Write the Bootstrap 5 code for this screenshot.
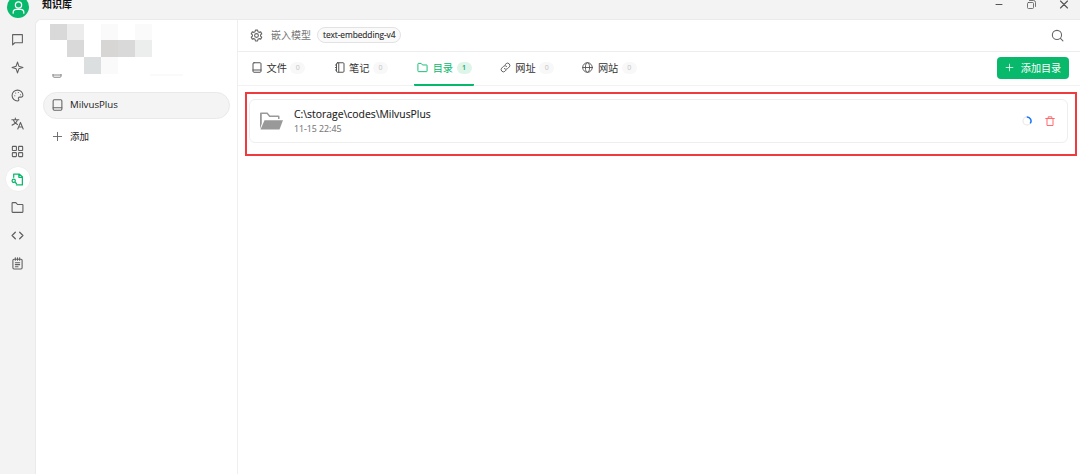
<!DOCTYPE html>
<html lang="zh-CN">
<head>
<meta charset="utf-8">
<meta name="viewport" content="width=device-width, initial-scale=1">
<title>知识库</title>
<link href="https://cdn.jsdelivr.net/npm/bootstrap@5.3.0/dist/css/bootstrap.min.css" rel="stylesheet">
<style>
  body { height: 474px; overflow: hidden; background: #f3f3f3; color: #202020; font: 10.2px/14px "Open Sans", "Noto Sans CJK SC", sans-serif; }
  svg { display: block; flex: none; fill: none; stroke: currentColor; stroke-width: 2; stroke-linecap: round; stroke-linejoin: round; }
  .titlebar { height: 19px; padding-left: 7px; }
  .avatar { width: 22px; height: 22px; margin-top: -4px; background: #08b96b; color: #fff; }
  .app-title { margin: 0 0 0 13px; font-size: 10px; line-height: 9px; color: #111; }
  .winbtns { gap: 21px; margin: -1px 10px 0 0; color: #555; height: 11px; }
  .rail { width: 35px; padding-top: 8px; gap: 4.1px; color: #606060; }
  .rail-item { width: 24px; height: 24px; color: inherit; }
  .rail-item.on { background: #fff; color: #08b96b; box-shadow: 0 0 0 .5px #e9e9e9; }
  .shell { height: 455px; }
  .panel { border: 1px solid #eaeaea; border-width: 1px 0 0 1px; border-top-left-radius: 6px; background: #fff; min-width: 0; }
  .bases { width: 202px; padding: 0 7px 0 7px; border-right: 1px solid #efefef; }
  .mosaic { display: grid; grid-template-columns: repeat(6, 17px); grid-template-rows: 16px 17px 17px; margin: 4px 0 0 7px; }
  .g1 { background: #d9d9d9; } .g2 { background: #ececec; } .g3 { background: #fafafa; } .g4 { background: #dcdfdf; } .g5 { background: #d8d6d5; } .g6 { background: #eceeed; }
  .hidden-item { height: 5px; margin: 0 0 0 9px; overflow: hidden; color: #888; }
  .hidden-item svg { margin-top: -7px; }
  .hidden-item i { width: 33px; height: 2px; background: #fafafa; margin-left: 88px; }
  .base-item { height: 27px; padding-left: 8px; gap: 7px; border: 1px solid #e9e9e9; border-radius: 14px; background: #f4f4f4; margin-top: 13px; font-size: 9.7px; }
  .base-item svg { margin-top: -1px; }
  .base-item span { margin-top: -1px; }
  .base-add { height: 26px; padding-left: 9px; gap: 7px; margin-top: 5px; font-size: 9.5px; }
  .base-add svg { margin-top: -1px; }
  .icon-dim { color: #666; }
  .content-pane { min-width: 0; }
  .model-row { height: 32px; padding: 0 16px 1px 12px; border-bottom: 1px solid #ededed; }
  .model-label { margin-left: 8px; color: #777; font-size: 10px; }
  .model-tag { height: 16px; line-height: 14px; padding: 0 5px; border: 1px solid #e2e2e2; border-radius: 8px; background: #fafafa; font-size: 8.4px; letter-spacing: -.08px; color: #222; margin-left: 6px; -webkit-text-stroke: .1px #333; }
  .tab-row { height: 34px; padding: 0 11px; border-bottom: 1px solid #f2f2f2; gap: 22.6px; }
  .kb-tab { width: 60px; padding: 0 3px; height: 33.500px; border-bottom: 2px solid transparent; border-radius: 1px; color: #333; white-space: nowrap; flex: none; }
  .kb-tab svg { margin-right: 4.5px; color: #555; }
  .kb-tab.on, .kb-tab.on svg { color: #08b96b; }
  .kb-tab.on { border-color: #08b96b; }
  .count { width: 15px; flex: none; height: 12px; line-height: 12px; border-radius: 6px; background: #f8f8f8; color: #c2c2c2; font-size: 7px; margin-left: 3.5px; text-align: center; }
  .on .count { background: #dff5ea; color: #08a65f; font-weight: 600; }
  .add-btn { width: 72px; height: 22px; padding: 0; border: 0; border-radius: 4px; background: #08b96b !important; color: #fff !important; font-size: 10.1px; line-height: 20px; gap: 7px; margin-bottom: 2px; }
  .marked { margin: 6px 3px 0 7px; height: 64px; border: 2px solid #ef3a40; padding: 5px 7px 0 2px; }
  .dir-card { height: 44px; border: 1px solid #eee; border-radius: 6px; padding: 0 12px 0 10px; }
  .dir-path { font-size: 10.4px; line-height: 15px; -webkit-text-stroke: .1px #202020; }
  .dir-date { font-size: 8.75px; line-height: 15px; color: #777; -webkit-text-stroke: .1px #888; }
  .dir-text { margin: 1px 0 0 11px; }
  .dir-actions { margin-top: -1px; gap: 13px; }
</style>
</head>
<body>
<svg class="d-none">
  <symbol id="book" viewBox="0 0 20 22"><rect x="2" y="1.500" width="16" height="19" rx="2"/><path d="M2 16h16"/></symbol>
  <symbol id="folder" viewBox="0 0 24 24"><path d="M2 4a1 1 0 0 1 1-1h6l3 3.500h9a1 1 0 0 1 1 1V20a1 1 0 0 1-1 1H3a1 1 0 0 1-1-1z"/></symbol>
  <symbol id="plus" viewBox="0 0 24 24"><path d="M12 3v18M3 12h18"/></symbol>
</svg>

<header class="titlebar d-flex align-items-start">
  <div class="avatar rounded-circle d-flex align-items-center justify-content-center">
    <svg width="15" height="15" viewBox="0 0 24 24"><circle cx="12" cy="8" r="5"/><path d="M3.500 21v-1q0-5 5-5h7q5 0 5 5v1"/></svg>
  </div>
  <div class="app-title fw-bold">知识库</div>
  <div class="winbtns d-flex align-items-center ms-auto">
    <svg width="12" height="12" viewBox="0 0 12 12" style="stroke-width:1"><path d="M3 5.500h6"/></svg>
    <svg width="11" height="11" viewBox="0 0 11 11" style="stroke-width:.8"><rect x="1.500" y="3.500" width="6" height="6" rx="1"/><path d="M3.500 1.500h4a2 2 0 0 1 2 2v4"/></svg>
    <svg width="12" height="12" viewBox="0 0 12 12" style="stroke-width:1.100"><path d="M2.500 2l7 7m0-7l-7 7"/></svg>
  </div>
</header>

<div class="shell d-flex">
  <nav class="rail d-flex flex-column align-items-center flex-shrink-0">
    <a class="rail-item rounded-circle d-flex align-items-center justify-content-center"><svg width="13" height="13" viewBox="0 0 24 24"><path d="M3 3h18v15H7l-4 4z"/></svg></a>
    <a class="rail-item rounded-circle d-flex align-items-center justify-content-center"><svg width="13" height="13" viewBox="0 0 24 24"><path d="M12 2l2.500 7.500L22 12l-7.500 2.500L12 22l-2.500-7.500L2 12l7.500-2.500z"/></svg></a>
    <a class="rail-item rounded-circle d-flex align-items-center justify-content-center"><svg width="13" height="13" viewBox="0 0 24 24"><path d="M12 2a10 10 0 0 0 0 20c2.500 0 3-2 2-3.500-1-2 0-3.500 2-3.500h3c2 0 3-1 3-3 0-5.500-4.500-10-10-10z"/><path d="M7 12.500h.1M8.500 7.500h.1M13.500 6.500h.1M17.500 10.500h.1"/></svg></a>
    <a class="rail-item rounded-circle d-flex align-items-center justify-content-center"><svg width="13" height="13" viewBox="0 0 24 24"><path d="M1.500 5h13M8 2v3M4 5c1 4 4 7 8 9M12 5c-1 4-5 8-10 10M12.500 22l5-12 5 12M14 18.500h7"/></svg></a>
    <a class="rail-item rounded-circle d-flex align-items-center justify-content-center"><svg width="13" height="13" viewBox="0 0 24 24"><rect x="2.500" y="2.500" width="7.500" height="7.500" rx="1"/><rect x="14" y="2.500" width="7.500" height="7.500" rx="1"/><rect x="2.500" y="14" width="7.500" height="7.500" rx="1"/><rect x="14" y="14" width="7.500" height="7.500" rx="1"/></svg></a>
    <a class="rail-item on rounded-circle d-flex align-items-center justify-content-center"><svg width="13" height="13" viewBox="0 0 24 24" style="stroke-width:2.300"><path d="M5 8V2h10l6 5v15H10M14.500 2v6H21"/><circle cx="5" cy="14.500" r="3"/><path d="M7.500 17l2.500 2.500"/></svg></a>
    <a class="rail-item rounded-circle d-flex align-items-center justify-content-center"><svg width="13" height="13"><use href="#folder"/></svg></a>
    <a class="rail-item rounded-circle d-flex align-items-center justify-content-center"><svg width="13" height="13" viewBox="0 0 24 24" style="stroke-width:2.300"><path d="M8 6l-6 6 6 6M16 6l6 6-6 6"/></svg></a>
    <a class="rail-item rounded-circle d-flex align-items-center justify-content-center"><svg width="13" height="13" viewBox="0 0 24 24"><rect x="3.500" y="4" width="17" height="18" rx="2"/><path d="M8 1.500V6M12 1.500V6M16 1.500V6M8 10.500h8M8 14h8M8 18h5"/></svg></a>
  </nav>

  <main class="panel d-flex flex-grow-1">
    <aside class="bases flex-shrink-0">
      <div class="mosaic">
        <i class="g1"></i><i class="g2"></i><i></i><i class="g3"></i><i></i><i class="g3"></i>
        <i></i><i class="g1"></i><i></i><i class="g5"></i><i class="g1"></i><i class="g6"></i>
        <i></i><i></i><i class="g4"></i><i class="g3"></i><i></i><i></i>
      </div>
      <div class="hidden-item d-flex"><svg width="10" height="11"><use href="#book"/></svg><i></i></div>
      <div class="base-item d-flex align-items-center"><svg class="icon-dim" width="11" height="12"><use href="#book"/></svg><span>MilvusPlus</span></div>
      <div class="base-add d-flex align-items-center"><svg class="icon-dim" width="11" height="11"><use href="#plus"/></svg><span>添加</span></div>
    </aside>

    <section class="content-pane flex-grow-1">
      <div class="model-row d-flex align-items-center">
        <svg class="icon-dim" width="13" height="13" viewBox="0 0 24 24"><path d="M10 2h4l.7 3 2 1.200 3-.9 2 3.500-2.200 2.100v2.200l2.200 2.100-2 3.500-3-.9-2 1.200-.7 3h-4l-.7-3-2-1.200-3 .9-2-3.500 2.200-2.100v-2.200L2.300 8.800l2-3.500 3 .9 2-1.200z"/><circle cx="12" cy="12" r="3.500"/></svg>
        <span class="model-label">嵌入模型</span><span class="model-tag">text-embedding-v4</span>
        <svg class="icon-dim ms-auto" width="13" height="13" viewBox="0 0 24 24"><circle cx="11" cy="11" r="8.500"/><path d="M17.500 17.500L22 22"/></svg>
      </div>
      <div class="d-flex tab-row">
        <div class="kb-tab d-flex align-items-center"><svg width="10" height="11"><use href="#book"/></svg><span>文件</span><span class="count">0</span></div>
        <div class="kb-tab d-flex align-items-center"><svg width="10" height="11" viewBox="0 0 20 22"><rect x="3" y="1.500" width="15" height="19" rx="2"/><path d="M7.500 2v18M1 6h2M1 11h2M1 16h2"/></svg><span>笔记</span><span class="count">0</span></div>
        <div class="kb-tab on d-flex align-items-center"><svg width="11" height="11"><use href="#folder"/></svg><span>目录</span><span class="count">1</span></div>
        <div class="kb-tab d-flex align-items-center"><svg width="11" height="11" viewBox="0 0 24 24"><path d="M9.500 14.500a5 5 0 0 0 7 0l4-4a5 5 0 0 0-7-7l-2.500 2.500M14.500 9.500a5 5 0 0 0-7 0l-4 4a5 5 0 0 0 7 7L13 18"/></svg><span>网址</span><span class="count">0</span></div>
        <div class="kb-tab d-flex align-items-center"><svg width="11" height="11" viewBox="0 0 24 24"><circle cx="12" cy="12" r="10.500"/><ellipse cx="12" cy="12" rx="4.500" ry="10.500"/><path d="M1.500 12h21"/></svg><span>网站</span><span class="count">0</span></div>
        <button class="btn add-btn d-flex align-items-center justify-content-center ms-auto align-self-center"><svg width="9" height="9"><use href="#plus"/></svg>添加目录</button>
      </div>
      <div class="marked">
        <div class="dir-card d-flex align-items-center">
          <svg width="23" height="19" viewBox="0 0 23 19" style="stroke:none;fill:#999"><path d="M0 1.500Q0 .5 1 .5h6.500l2.500 3h8.500q1 0 1 1V7H18V5H9.300L6.800 2H1.800v9.500L0 17z"/><path d="M4.500 8.200H23L19.500 17.500H.5z"/></svg>
          <div class="dir-text"><div class="dir-path">C:\storage\codes\MilvusPlus</div><div class="dir-date">11-15 22:45</div></div>
          <div class="dir-actions d-flex align-items-center ms-auto">
            <svg width="10" height="10" viewBox="0 0 10 10" style="stroke-width:1.500;stroke-linecap:butt"><circle cx="5" cy="5" r="4" stroke="#eee"/><path d="M4.800 1A4 4 0 0 1 8.200 7.400" stroke="#1677ff"/></svg>
            <svg width="10" height="10" viewBox="0 0 10 10" style="stroke:#ff6b6e;stroke-width:1"><path d="M.7 2.500h8.600M3.200 2.500v-1.700h3.600v1.700M2 2.500v7h6v-7"/></svg>
          </div>
        </div>
      </div>
    </section>
  </main>
</div>
<script src="https://cdn.jsdelivr.net/npm/bootstrap@5.3.0/dist/js/bootstrap.bundle.min.js"></script>
</body>
</html>
